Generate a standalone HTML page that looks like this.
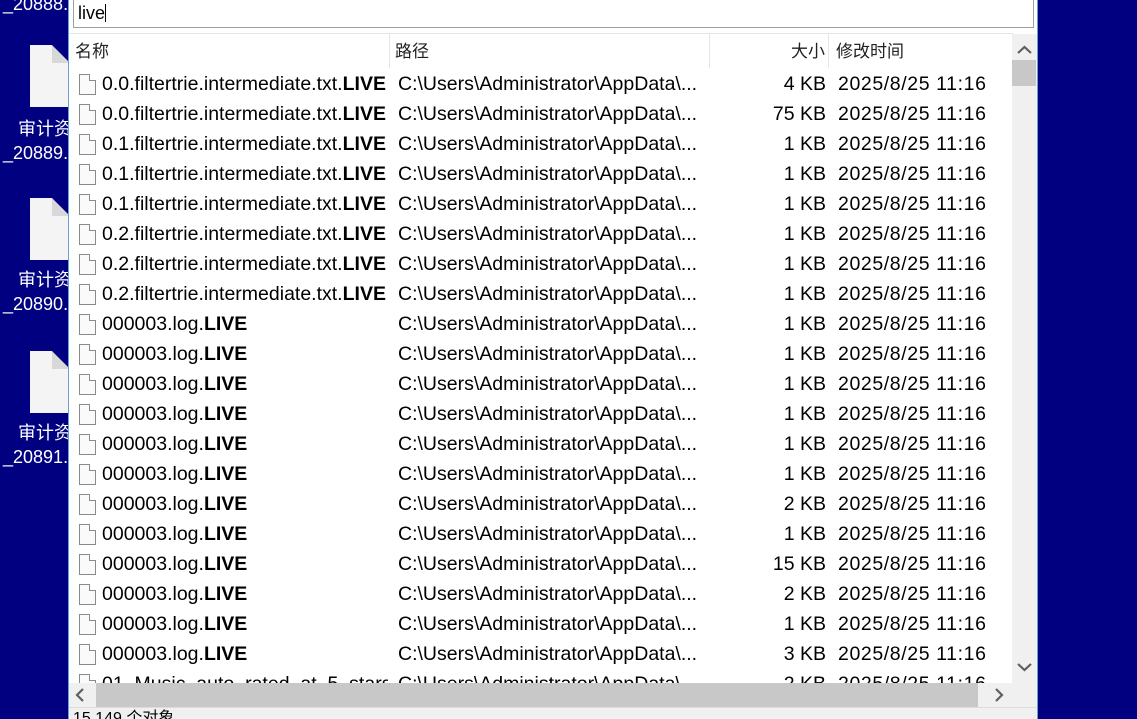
<!DOCTYPE html>
<html><head><meta charset="utf-8"><style>
*{margin:0;padding:0;box-sizing:border-box}
body{width:1137px;height:719px;overflow:hidden;background:#000080;position:relative;font-family:"Liberation Sans","Noto Sans CJK SC",sans-serif;font-size:18px;color:#000}
.dico{position:absolute;left:30px;width:40px;height:62px;background:#f4f4f4}
.dico:after{content:"";position:absolute;right:0;top:0;border-left:9px solid #d8d8d8;border-bottom:9px solid #d8d8d8;border-top:9px solid #000080;border-right:9px solid #000080;width:0;height:0}
.dl{position:absolute;left:3px;color:#fff;font-size:18px;line-height:24px;white-space:nowrap}
.win{position:absolute;left:68px;top:0;width:970px;height:719px;background:#fff;border-left:1px solid #6aa0d8;border-right:1px solid #6aa0d8;overflow:hidden}
.search{position:absolute;left:4px;top:-2px;width:961px;height:30px;border:1px solid #a0a0a0;background:#fff;padding-left:4px;line-height:28px;font-size:18px}
.sep{position:absolute;left:0;top:33px;width:944px;height:1px;background:#e5e5e5}
.hdr{position:absolute;top:35px;height:34px;line-height:34px;font-size:17px;color:#222}
.hd{position:absolute;top:34px;width:1px;height:34px;background:#e5e5e5}
.row{position:absolute;left:0;height:30px;width:944px;line-height:31px;white-space:nowrap;font-size:19.5px}
.row .i{position:absolute;left:10px;top:5px;width:17px;height:21px;border:1px solid #8a8a8a;background:#fafafa}
.row .i:after{content:"";position:absolute;right:-1px;top:-1px;width:6px;height:6px;background:#fff;border-left:1px solid #8a8a8a;border-bottom:1px solid #8a8a8a}
.row .n{position:absolute;left:33px;width:286px;overflow:hidden}
.row .p{position:absolute;left:329px;width:305px;overflow:hidden}
.row .s{position:absolute;right:187px;text-align:right}
.row .d{position:absolute;left:769px;letter-spacing:0.6px}
.list{position:absolute;left:0;top:69px;width:944px;height:614px;overflow:hidden}
.vs{position:absolute;left:943px;top:34px;width:25px;height:649px;background:#f0f0f0}
.hs{position:absolute;left:0;top:683px;width:968px;height:24px;background:#f0f0f0}
.st{position:absolute;left:0;top:707px;width:968px;height:12px;background:#f0f0f0;border-top:1px solid #dcdcdc;font-size:16px;line-height:22px;padding-left:4px;overflow:hidden}
</style></head><body>
<div class="dl" style="top:-8px">_20888.</div>
<div class="dico" style="top:45px"></div><div class="dl" style="top:117px;left:18px">审计资</div><div class="dl" style="top:141px">_20889.</div>
<div class="dico" style="top:198px"></div><div class="dl" style="top:268px;left:18px">审计资</div><div class="dl" style="top:292px">_20890.</div>
<div class="dico" style="top:351px"></div><div class="dl" style="top:421px;left:18px">审计资</div><div class="dl" style="top:445px">_20891.</div>
<div class="win">
<div class="search">live<span style="display:inline-block;width:1px;height:18px;background:#000;vertical-align:-3px"></span></div>
<div class="sep"></div>
<div class="hdr" style="left:6px">名称</div>
<div class="hd" style="left:320px"></div>
<div class="hdr" style="left:326px">路径</div>
<div class="hd" style="left:640px"></div>
<div class="hdr" style="left:722px">大小</div>
<div class="hd" style="left:759px"></div>
<div class="hdr" style="left:767px">修改时间</div>
<div class="list" id="l"></div>
<div class="vs"><svg width="25" height="649"><path d="M6 19 L12.5 13 L19 19" stroke="#606060" stroke-width="2.2" fill="none"/><rect x="0" y="26" width="24" height="26" fill="#c8c8c8"/><path d="M6 630 L12.5 636 L19 630" stroke="#606060" stroke-width="2.2" fill="none"/></svg></div>
<div class="hs"><svg width="968" height="24"><path d="M14 6 L8 12 L14 18" stroke="#606060" stroke-width="2.2" fill="none"/><rect x="27" y="0" width="882" height="24" fill="#c8c8c8"/><path d="M927 6 L933 12 L927 18" stroke="#606060" stroke-width="2.2" fill="none"/></svg></div>
<div class="st">15,149 个对象</div>
</div>
<script>
var r=[["0.0.filtertrie.intermediate.txt.","4 KB"],["0.0.filtertrie.intermediate.txt.","75 KB"],["0.1.filtertrie.intermediate.txt.","1 KB"],["0.1.filtertrie.intermediate.txt.","1 KB"],["0.1.filtertrie.intermediate.txt.","1 KB"],["0.2.filtertrie.intermediate.txt.","1 KB"],["0.2.filtertrie.intermediate.txt.","1 KB"],["0.2.filtertrie.intermediate.txt.","1 KB"]];
var s=["1","1","1","1","1","1","2","1","15","2","1","3"];
for(var i=0;i<12;i++)r.push(["000003.log.",s[i]+" KB"]);
var h="";
for(var i=0;i<r.length;i++){h+='<div class="row" style="top:'+(i*30)+'px"><div class="i"></div><div class="n">'+r[i][0]+'<b>LIVE</b></div><div class="p">C:\\Users\\Administrator\\AppData\\...</div><div class="s">'+r[i][1]+'</div><div class="d">2025/8/25 11:16</div></div>';}
h+='<div class="row" style="top:600px"><div class="i"></div><div class="n">01_Music_auto_rated_at_5_stars</div><div class="p">C:\\Users\\Administrator\\AppData\\...</div><div class="s">2 KB</div><div class="d">2025/8/25 11:16</div></div>';
document.getElementById("l").innerHTML=h;
</script>
</body></html>
